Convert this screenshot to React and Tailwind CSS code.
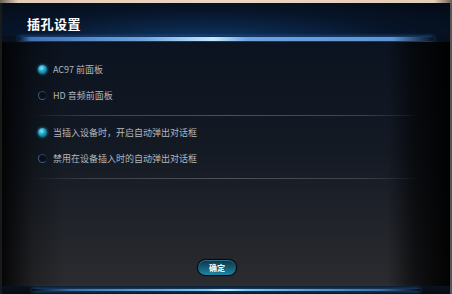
import { useState } from "react";

const font = "font-['Noto_Sans_CJK_SC','Noto_Sans',sans-serif]";

const Radio = ({ checked }) =>
  checked ? (
    <span className="w-[9px] h-[9px] rounded-full shrink-0 bg-[radial-gradient(circle_at_40%_35%,#8fe4f5,#1b9cc0_45%,#0a4a66)] shadow-[0_0_3px_#1aa6d0]" />
  ) : (
    <span className="w-[9px] h-[9px] rounded-full shrink-0 bg-[#0a0f18] border-[1.5px] border-[#3a5f8a] border-r-[#162438] border-t-[#2a4466]" />
  );

const Item = ({ checked, label, onClick }) => (
  <div onClick={onClick} className="flex items-center gap-[6px] pl-[36px] h-[16px] cursor-pointer">
    <Radio checked={checked} />
    <span className="text-[9px] text-[#b3b7be] leading-none">{label}</span>
  </div>
);

const Separator = () => (
  <div className="mx-[30px] h-px bg-[linear-gradient(to_right,transparent,#3a4350_15%,#4a525c_50%,#3a4350_85%,transparent)]" />
);

const App = () => {
  // panel choice and popup choice
  const [panel, setPanel] = useState("ac97");
  const [popup, setPopup] = useState("on");

  return (
    <div className={`w-[452px] h-[294px] flex flex-col bg-black overflow-hidden ${font}`}>
      <div className="h-[3px] bg-[linear-gradient(to_right,#6a6058,#e2cdb8_4%,#ead7c3_50%,#e2cdb8_96%,#6a6058)]" />
      <div className="flex-1 flex flex-col border-l-[2px] border-l-[#1a1a1a] border-r-[2px] border-r-[#565656]">
        {/* header */}
        <div className="h-[33px] flex items-center pl-[25px] pt-[8px] bg-[radial-gradient(ellipse_at_45%_110%,#0e3462,#071529_55%,#040a14)]">
          <h1 className="text-[13px] font-bold text-white tracking-[0.5px]">插孔设置</h1>
        </div>
        <div className="h-[6px] flex items-center bg-[#06101f]">
          <div className="flex-1 mx-[16px] h-[4px] rounded-full bg-[linear-gradient(to_right,transparent,#3f73b5_3%,#6ea4e0_30%,#c6e8ff_47%,#6ea4e0_55%,#5e95d6_90%,transparent)] shadow-[0_0_4px_#2a6fc0]" />
        </div>

        {/* body */}
        <div className="flex-1 flex flex-col bg-[linear-gradient(to_right,rgba(0,0,0,0.85),rgba(0,0,0,0.25)_7%,transparent_14%,transparent_86%,rgba(0,0,0,0.6)_92%,rgba(0,0,0,0.95)),linear-gradient(to_bottom,#0b1320,#141a24_45%,#25272c_85%,#2b2c30)]">
          <div className="pt-[19px] flex flex-col gap-[10px]">
            <Item checked={panel === "ac97"} label="AC97 前面板" onClick={() => setPanel("ac97")} />
            <Item checked={panel === "hd"} label="HD 音频前面板" onClick={() => setPanel("hd")} />
          </div>
          <div className="mt-[12px]">
            <Separator />
          </div>
          <div className="pt-[8px] flex flex-col gap-[10px]">
            <Item checked={popup === "on"} label="当插入设备时，开启自动弹出对话框" onClick={() => setPopup("on")} />
            <Item checked={popup === "off"} label="禁用在设备插入时的自动弹出对话框" onClick={() => setPopup("off")} />
          </div>
          <div className="mt-[12px]">
            <Separator />
          </div>
          <div className="flex-1 flex items-end justify-center pb-[10px] pr-[18px]">
            <button className="w-[40px] h-[17px] rounded-full border border-[#05080c] bg-[linear-gradient(to_bottom,#0f3344,#145b74_50%,#1e86a6)] shadow-[inset_0_1px_0_#2d6f86,0_0_1px_#000] text-[8px] font-bold text-white leading-none">
              确定
            </button>
          </div>
        </div>

        {/* bottom glow */}
        <div className="h-[8px] flex flex-col justify-center bg-[linear-gradient(to_bottom,#0b1220,#060a12)]">
          <div className="mx-[30px] h-[2px] bg-[linear-gradient(to_right,transparent,#3e6ea8_10%,#7fc8f5_45%,#b8ecff_50%,#7fc8f5_55%,#3e6ea8_90%,transparent)] shadow-[0_0_4px_#2a8fe0]" />
        </div>
      </div>
    </div>
  );
};

export default App;
